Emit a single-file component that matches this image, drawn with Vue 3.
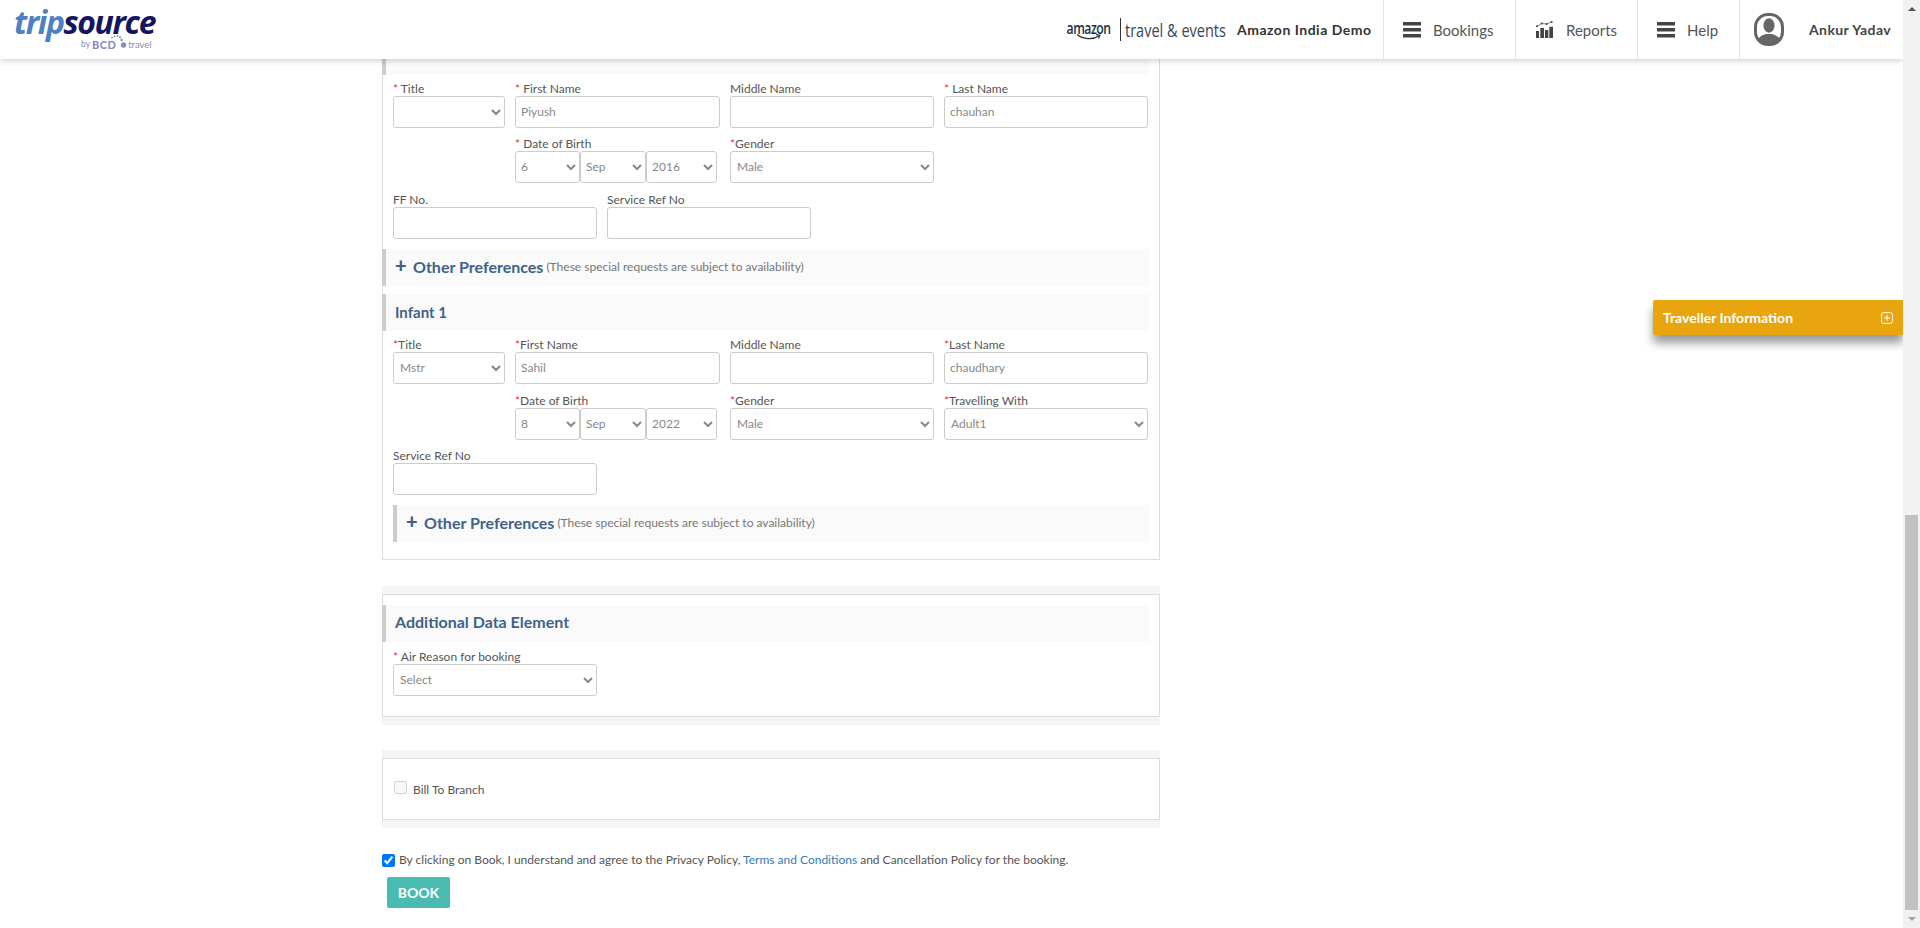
<script setup>
const days = ['6', '8']
const agreeChecked = true
</script>

<template>
  <div class="page">
    <div class="screen">
      <header class="topbar">
        <div class="logo">
          <div class="logo-word"><span class="trip">trip</span><span class="source">source</span></div>
          <div class="logo-by">
            <span class="by">by</span>
            <span class="bcd">BCD</span>
            <svg class="bcd-dots" width="16" height="20" viewBox="0 0 16 20">
              <g fill="#8a8cba">
                <circle cx="1" cy="2.6" r="0.9" />
                <circle cx="3.5" cy="1.4" r="0.9" />
                <circle cx="6.5" cy="1.1" r="1" />
                <circle cx="9" cy="2.3" r="1.1" />
                <circle cx="10.6" cy="5" r="1.2" />
                <circle cx="12.5" cy="10" r="2.7" />
              </g>
            </svg>
            <span class="travel-word">travel</span>
          </div>
        </div>

        <div class="top-right">
          <div class="amazon">
            <div class="amazon-mark">
              <span class="amazon-word">amazon</span>
              <svg class="smile" width="28" height="8" viewBox="0 0 28 8">
                <path d="M2 1.5C8 6.5 18 6.8 24 3" fill="none" stroke="#232f3e" stroke-width="1.3" />
                <path d="M21 1.6L25 2.2L23.6 5.6" fill="none" stroke="#232f3e" stroke-width="1.1" />
              </svg>
            </div>
            <span class="amazon-rule"></span>
            <span class="amazon-events">travel &amp; events</span>
          </div>
          <span class="company">Amazon India Demo</span>

          <a class="nav-item nav-bookings">
            <svg width="18" height="16" viewBox="0 0 18 16"><path d="M0 0h18v3.6H0zM0 6h18v3.6H0zM0 12h18v3.6H0z" fill="#444" /></svg>
            <span>Bookings</span>
          </a>
          <a class="nav-item nav-reports">
            <svg width="17" height="17" viewBox="0 0 17 17">
              <path d="M0 10h3v7H0zM4.3 7H8v10H4.3zM9 9h3.3v8H9zM13.3 5.7H17V17h-3.7z" fill="#444" />
              <path d="M1 5.3L5.7 2.5L10.7 3L15.7 1" fill="none" stroke="#666" stroke-width="0.8" />
              <g fill="#444">
                <circle cx="1" cy="5.3" r="1" />
                <circle cx="5.7" cy="2.5" r="1" />
                <circle cx="10.7" cy="3" r="1" />
                <circle cx="15.7" cy="1" r="1" />
              </g>
            </svg>
            <span>Reports</span>
          </a>
          <a class="nav-item nav-help">
            <svg width="18" height="16" viewBox="0 0 18 16"><path d="M0 0h18v3.6H0zM0 6h18v3.6H0zM0 12h18v3.6H0z" fill="#444" /></svg>
            <span>Help</span>
          </a>
          <div class="nav-user">
            <svg width="30" height="33" viewBox="0 0 30 33">
              <defs><clipPath id="userClip"><rect x="2" y="2" width="26" height="29" rx="12" /></clipPath></defs>
              <rect x="1.5" y="1.5" width="27" height="30" rx="12.5" fill="#fff" stroke="#666" stroke-width="3" />
              <g clip-path="url(#userClip)" fill="#666">
                <ellipse cx="15" cy="12.5" rx="5.6" ry="7.2" />
                <path d="M2 33c0-8 6-11 10-12h6c4 1 10 4 10 12z" />
              </g>
            </svg>
            <span class="user-name">Ankur Yadav</span>
          </div>
        </div>
      </header>

      <main class="content">
        <section class="panel panel-pax">
          <div class="bar bar-stub"></div>

          <div class="fields cols-4 adult-top">
            <div class="field">
              <label><i>*</i> Title</label>
              <select><option></option></select>
            </div>
            <div class="field">
              <label><i>*</i> First Name</label>
              <input value="Piyush" />
            </div>
            <div class="field">
              <label>Middle Name</label>
              <input />
            </div>
            <div class="field">
              <label><i>*</i> Last Name</label>
              <input value="chauhan" />
            </div>

            <div class="field field-dob">
              <label><i>*</i> Date of Birth</label>
              <div class="dob">
                <select class="d"><option>{{ days[0] }}</option></select>
                <select class="m"><option>Sep</option></select>
                <select class="y"><option>2016</option></select>
              </div>
            </div>
            <div class="field">
              <label><i>*</i>Gender</label>
              <select><option>Male</option></select>
            </div>
          </div>

          <div class="fields cols-2">
            <div class="field">
              <label>FF No.</label>
              <input />
            </div>
            <div class="field">
              <label>Service Ref No</label>
              <input />
            </div>
          </div>

          <div class="bar prefs">
            <span class="plus">+</span>
            <span class="prefs-title">Other Preferences</span>
            <span class="prefs-note">(These special requests are subject to availability)</span>
          </div>

          <div class="bar heading">Infant 1</div>

          <div class="fields cols-4 infant-top">
            <div class="field">
              <label><i>*</i>Title</label>
              <select><option>Mstr</option></select>
            </div>
            <div class="field">
              <label><i>*</i>First Name</label>
              <input value="Sahil" />
            </div>
            <div class="field">
              <label>Middle Name</label>
              <input />
            </div>
            <div class="field">
              <label><i>*</i>Last Name</label>
              <input value="chaudhary" />
            </div>

            <div class="field field-dob">
              <label><i>*</i>Date of Birth</label>
              <div class="dob">
                <select class="d"><option>{{ days[1] }}</option></select>
                <select class="m"><option>Sep</option></select>
                <select class="y"><option>2022</option></select>
              </div>
            </div>
            <div class="field">
              <label><i>*</i>Gender</label>
              <select><option>Male</option></select>
            </div>
            <div class="field">
              <label><i>*</i>Travelling With</label>
              <select><option>Adult1</option></select>
            </div>
          </div>

          <div class="fields cols-2">
            <div class="field">
              <label>Service Ref No</label>
              <input />
            </div>
          </div>

          <div class="bar prefs prefs-inset">
            <span class="plus">+</span>
            <span class="prefs-title">Other Preferences</span>
            <span class="prefs-note">(These special requests are subject to availability)</span>
          </div>
        </section>

        <section class="well">
          <div class="panel panel-extra">
            <div class="bar heading heading-strong">Additional Data Element</div>
            <div class="fields cols-2">
              <div class="field">
                <label><i>*</i> Air Reason for booking</label>
                <select><option>Select</option></select>
              </div>
            </div>
          </div>
        </section>

        <section class="well">
          <div class="panel panel-bill">
            <input id="bill" type="checkbox" disabled />
            <label for="bill">Bill To Branch</label>
          </div>
        </section>

        <div class="agree">
          <input type="checkbox" :checked="agreeChecked" />
          <span>By clicking on Book, I understand and agree to the Privacy Policy, <a>Terms and Conditions</a> and Cancellation Policy for the booking.</span>
        </div>
        <button class="book">BOOK</button>
      </main>

      <aside class="traveller">
        <span>Traveller Information</span>
        <svg width="12" height="12" viewBox="0 0 12 12">
          <rect x="0.6" y="0.6" width="10.8" height="10.8" rx="2" fill="none" stroke="#fff" />
          <path d="M6 3v6M3 6h6" stroke="#fff" />
        </svg>
      </aside>
    </div>

    <div class="scrollbar">
      <span class="arrow arrow-up"></span>
      <span class="thumb"></span>
      <span class="arrow arrow-down"></span>
    </div>
  </div>
</template>

<style>
html, body {
  margin: 0;
  height: 100%;
  overflow: hidden;
  background: #fff;
}
</style>

<style scoped>
.page {
  display: flex;
  height: 928px;
  overflow: hidden;
  font-family: "Lato", "Open Sans", sans-serif;
  color: #555;
}

.screen {
  position: relative;
  flex: 1;
  min-width: 0;
}

.topbar {
  position: relative;
  z-index: 2;
  display: flex;
  justify-content: space-between;
  height: 59px;
  background: #fff;
  box-shadow: 0 2px 6px rgba(0, 0, 0, 0.18);
}

.logo {
  padding: 7px 0 0 14px;
}

.logo-word {
  font-family: "Open Sans", sans-serif;
  font-style: italic;
  font-weight: 700;
  font-size: 32px;
  line-height: 30px;
  letter-spacing: -1.4px;
}

.trip {
  color: #4d80c6;
}

.source {
  color: #14175f;
}

.logo-by {
  display: flex;
  align-items: center;
  height: 11px;
  margin: 2px 0 0 67px;
  color: #8a8cba;
  line-height: 11px;
}

.by {
  font-size: 8.5px;
}

.bcd {
  margin-left: 2px;
  font-size: 11px;
  font-weight: 900;
  letter-spacing: 0.4px;
}

.bcd-dots {
  flex: none;
  margin-left: -5px;
}

.travel-word {
  margin-left: 1px;
  font-size: 9.5px;
}

.top-right {
  display: flex;
  align-items: stretch;
  padding-right: 1px;
}

.amazon {
  display: flex;
  align-items: center;
  width: 172px;
  color: #232f3e;
}

.amazon-mark {
  display: flex;
  flex-direction: column;
  align-items: center;
  width: 48px;
  margin-top: 2px;
}

.amazon-word {
  font-family: "Open Sans", sans-serif;
  font-size: 17px;
  font-weight: 600;
  line-height: 15px;
  letter-spacing: -0.7px;
  transform: scaleX(0.72);
}

.smile {
  margin-top: -2px;
}

.amazon-rule {
  flex: none;
  width: 1px;
  height: 23px;
  margin: 0 4px 0 7px;
  background: #333;
}

.amazon-events {
  font-family: "Open Sans", sans-serif;
  font-size: 17.5px;
  font-weight: 400;
  white-space: nowrap;
  color: #3a4654;
  transform: scaleX(0.83);
  transform-origin: left center;
}

.company {
  display: flex;
  align-items: center;
  width: 146px;
  font-size: 14px;
  font-weight: 700;
  letter-spacing: 0.5px;
  color: #333;
}

.nav-item {
  display: flex;
  align-items: center;
  gap: 12px;
  border-left: 1px solid #e3e3e3;
  font-size: 15px;
  color: #555;
}

.nav-bookings {
  width: 112px;
  padding-left: 19px;
}

.nav-reports {
  width: 101px;
  padding-left: 20px;
  gap: 13px;
}

.nav-help {
  width: 82px;
  padding-left: 19px;
}

.nav-user {
  display: flex;
  align-items: center;
  gap: 25px;
  width: 148px;
  padding-left: 14px;
  border-left: 1px solid #e3e3e3;
}

.user-name {
  font-size: 14px;
  font-weight: 700;
  letter-spacing: 0.4px;
  color: #444;
}

.content {
  width: 778px;
  margin-left: 382px;
}

.panel {
  box-sizing: border-box;
  border: 1px solid #ddd;
  background: #fff;
}

.panel-pax {
  border-top: 0;
  padding-bottom: 17px;
}

.bar {
  box-sizing: border-box;
  height: 37px;
  margin: 0 10px 0 -1px;
  background: #fafafa;
  border-left: 4px solid #ccc;
}

.bar-stub {
  height: 16px;
}

.fields {
  display: grid;
  column-gap: 10px;
  row-gap: 9px;
  padding: 7px 0 10px 10px;
}

.fields + .fields {
  padding-top: 0;
}

.infant-top {
  row-gap: 10px;
  padding-bottom: 9px;
}

.cols-4 {
  grid-template-columns: 112px 205px 204px 204px;
}

.cols-2 {
  grid-template-columns: 204px 204px;
}

.field {
  display: flex;
  flex-direction: column;
  min-width: 0;
}

.field-dob {
  grid-column-start: 2;
}

.field label {
  height: 14px;
  font-size: 12px;
  line-height: 13px;
  color: #555;
  white-space: nowrap;
}

.field label i {
  font-style: normal;
  color: #e33;
}

.field input {
  padding: 0 5px 1px;
}

.field select {
  padding: 0 2px 1px;
}

.field input,
.field select {
  box-sizing: border-box;
  width: 100%;
  height: 32px;
  border: 1px solid #ccc;
  border-radius: 3px;
  background-color: #fff;
  font-family: inherit;
  font-size: 12px;
  color: #888;
}

.dob {
  display: flex;
}

.field .dob select {
  flex: none;
  padding: 0 1px 1px;
}

.dob .d {
  width: 65px;
}

.dob .m {
  width: 66px;
}

.dob .y {
  width: 71px;
}

.prefs {
  display: flex;
  align-items: center;
  padding-left: 9px;
  padding-bottom: 2px;
}

.prefs-inset {
  margin-left: 10px;
}

.plus {
  width: 18px;
  font-size: 20px;
  font-weight: 900;
  line-height: 20px;
  margin-top: -3px;
  color: #3f6289;
}

.prefs-title {
  font-size: 16px;
  font-weight: 700;
  color: #3f6289;
}

.prefs-note {
  margin-left: 3px;
  font-size: 12px;
  color: #777;
}

.heading {
  display: flex;
  align-items: center;
  margin-top: 8px;
  padding-left: 9px;
  padding-bottom: 2px;
  font-size: 15px;
  font-weight: 700;
  color: #3f6289;
}

.heading-strong {
  margin-top: 10px;
  padding-bottom: 4px;
  font-size: 16px;
}

.well {
  margin-top: 26px;
  padding: 8px 0;
  background: #f5f5f5;
}

.well + .well {
  margin-top: 25px;
}

.panel-extra {
  height: 123px;
}

.panel-extra .fields {
  padding-top: 8px;
}

.panel-bill {
  display: flex;
  align-items: center;
  height: 62px;
  padding-left: 11px;
  font-size: 12px;
  color: #555;
}

.panel-bill input {
  width: 13px;
  height: 13px;
  margin: -3px 6px 0 0;
}

.agree {
  display: flex;
  align-items: center;
  gap: 4px;
  margin-top: 25px;
  font-size: 12px;
  line-height: 14px;
  color: #555;
}

.agree input {
  width: 13px;
  height: 13px;
  margin: 0;
}

.agree a {
  color: #337ab7;
}

.book {
  display: block;
  width: 63px;
  height: 31px;
  margin: 10px 0 0 5px;
  padding: 0;
  border: 0;
  border-radius: 2px;
  background: #49bbb0;
  color: #fff;
  font-family: inherit;
  font-size: 14px;
  font-weight: 700;
}

.traveller {
  position: absolute;
  top: 300px;
  right: 0;
  display: flex;
  align-items: center;
  justify-content: space-between;
  box-sizing: border-box;
  width: 250px;
  height: 35px;
  padding: 0 10px;
  border-radius: 2px 0 0 2px;
  background: #e9a50d;
  box-shadow: 0 8px 10px rgba(0, 0, 0, 0.4);
  color: #fff;
  font-size: 14px;
  font-weight: 700;
}

.scrollbar {
  position: relative;
  z-index: 3;
  display: flex;
  flex-direction: column;
  align-items: center;
  justify-content: space-between;
  width: 17px;
  height: 928px;
  background: #f1f1f1;
}

.arrow {
  width: 0;
  height: 0;
  margin: 7px 0;
  border-left: 4px solid transparent;
  border-right: 4px solid transparent;
}

.arrow-up {
  border-bottom: 4px solid #505050;
}

.arrow-down {
  border-top: 4px solid #a3a3a3;
}

.thumb {
  flex: none;
  width: 13px;
  height: 395px;
  margin-top: auto;
  background: #c1c1c1;
}
</style>
